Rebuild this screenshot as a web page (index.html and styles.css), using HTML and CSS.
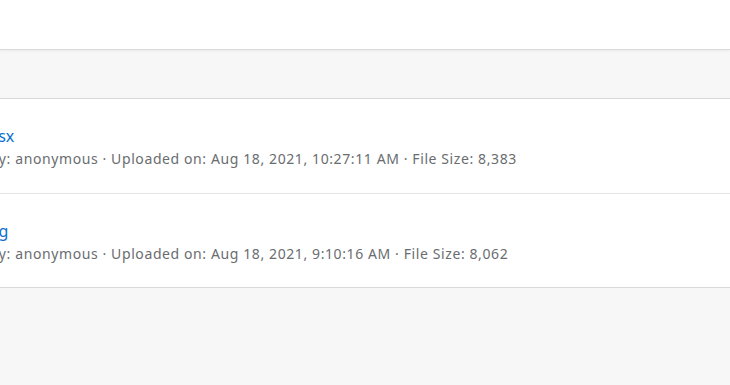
FILE: index.html
```html
<!DOCTYPE html>
<html lang="en">
<head>
    <meta charset="UTF-8">
    <title>Attachments</title>
    <link rel="stylesheet" href="styles.css">
</head>
<body>
    <!-- top bar -->
    <div class="shell-bar"></div>

    <!-- list toolbar -->
    <div class="list-toolbar"></div>

    <!-- attachment list -->
    <ul class="file-list">
        <li class="file-item">
            <div class="file-info">
                <a class="file-name" href="#">Example.xlsx</a>
                <div class="file-meta">Uploaded by: anonymous · Uploaded on: Aug 18, 2021, 10:27:11 AM · File Size: 8,383</div>
            </div>
        </li>
        <li class="file-item">
            <div class="file-info">
                <a class="file-name" href="#">capture.png</a>
                <div class="file-meta">Uploaded by: anonymous · Uploaded on: Aug 18, 2021, 9:10:16 AM · File Size: 8,062</div>
            </div>
        </li>
    </ul>
</body>
</html>
```
FILE: styles.css
```css
* { margin: 0; padding: 0; box-sizing: border-box; }
body { background: #f7f7f7; font-family: "Noto Sans", "Open Sans", sans-serif; overflow: hidden; }

.shell-bar { height: 50px; background: #fff; border-bottom: 1px solid #d9d9d9; box-shadow: 0 1px 3px rgba(0, 0, 0, 0.05); position: relative; }
.list-toolbar { height: 49px; background: #f7f7f7; border-bottom: 1px solid #d9d9d9; }

.file-list { list-style: none; background: #fff; }
.file-item { height: 95px; padding-top: 27px; border-bottom: 1px solid #e5e5e5; overflow: hidden; }
.file-item:last-child { height: 94px; border-bottom-color: #d9d9d9; }
.file-info { margin-left: -83px; white-space: nowrap; }

.file-name { display: block; font-size: 16px; line-height: 20px; color: #0a6ed1; text-decoration: none; }
.file-meta { margin-top: 3px; font-size: 14px; line-height: 20px; color: #6a6d70; letter-spacing: 0.6px; }
```
